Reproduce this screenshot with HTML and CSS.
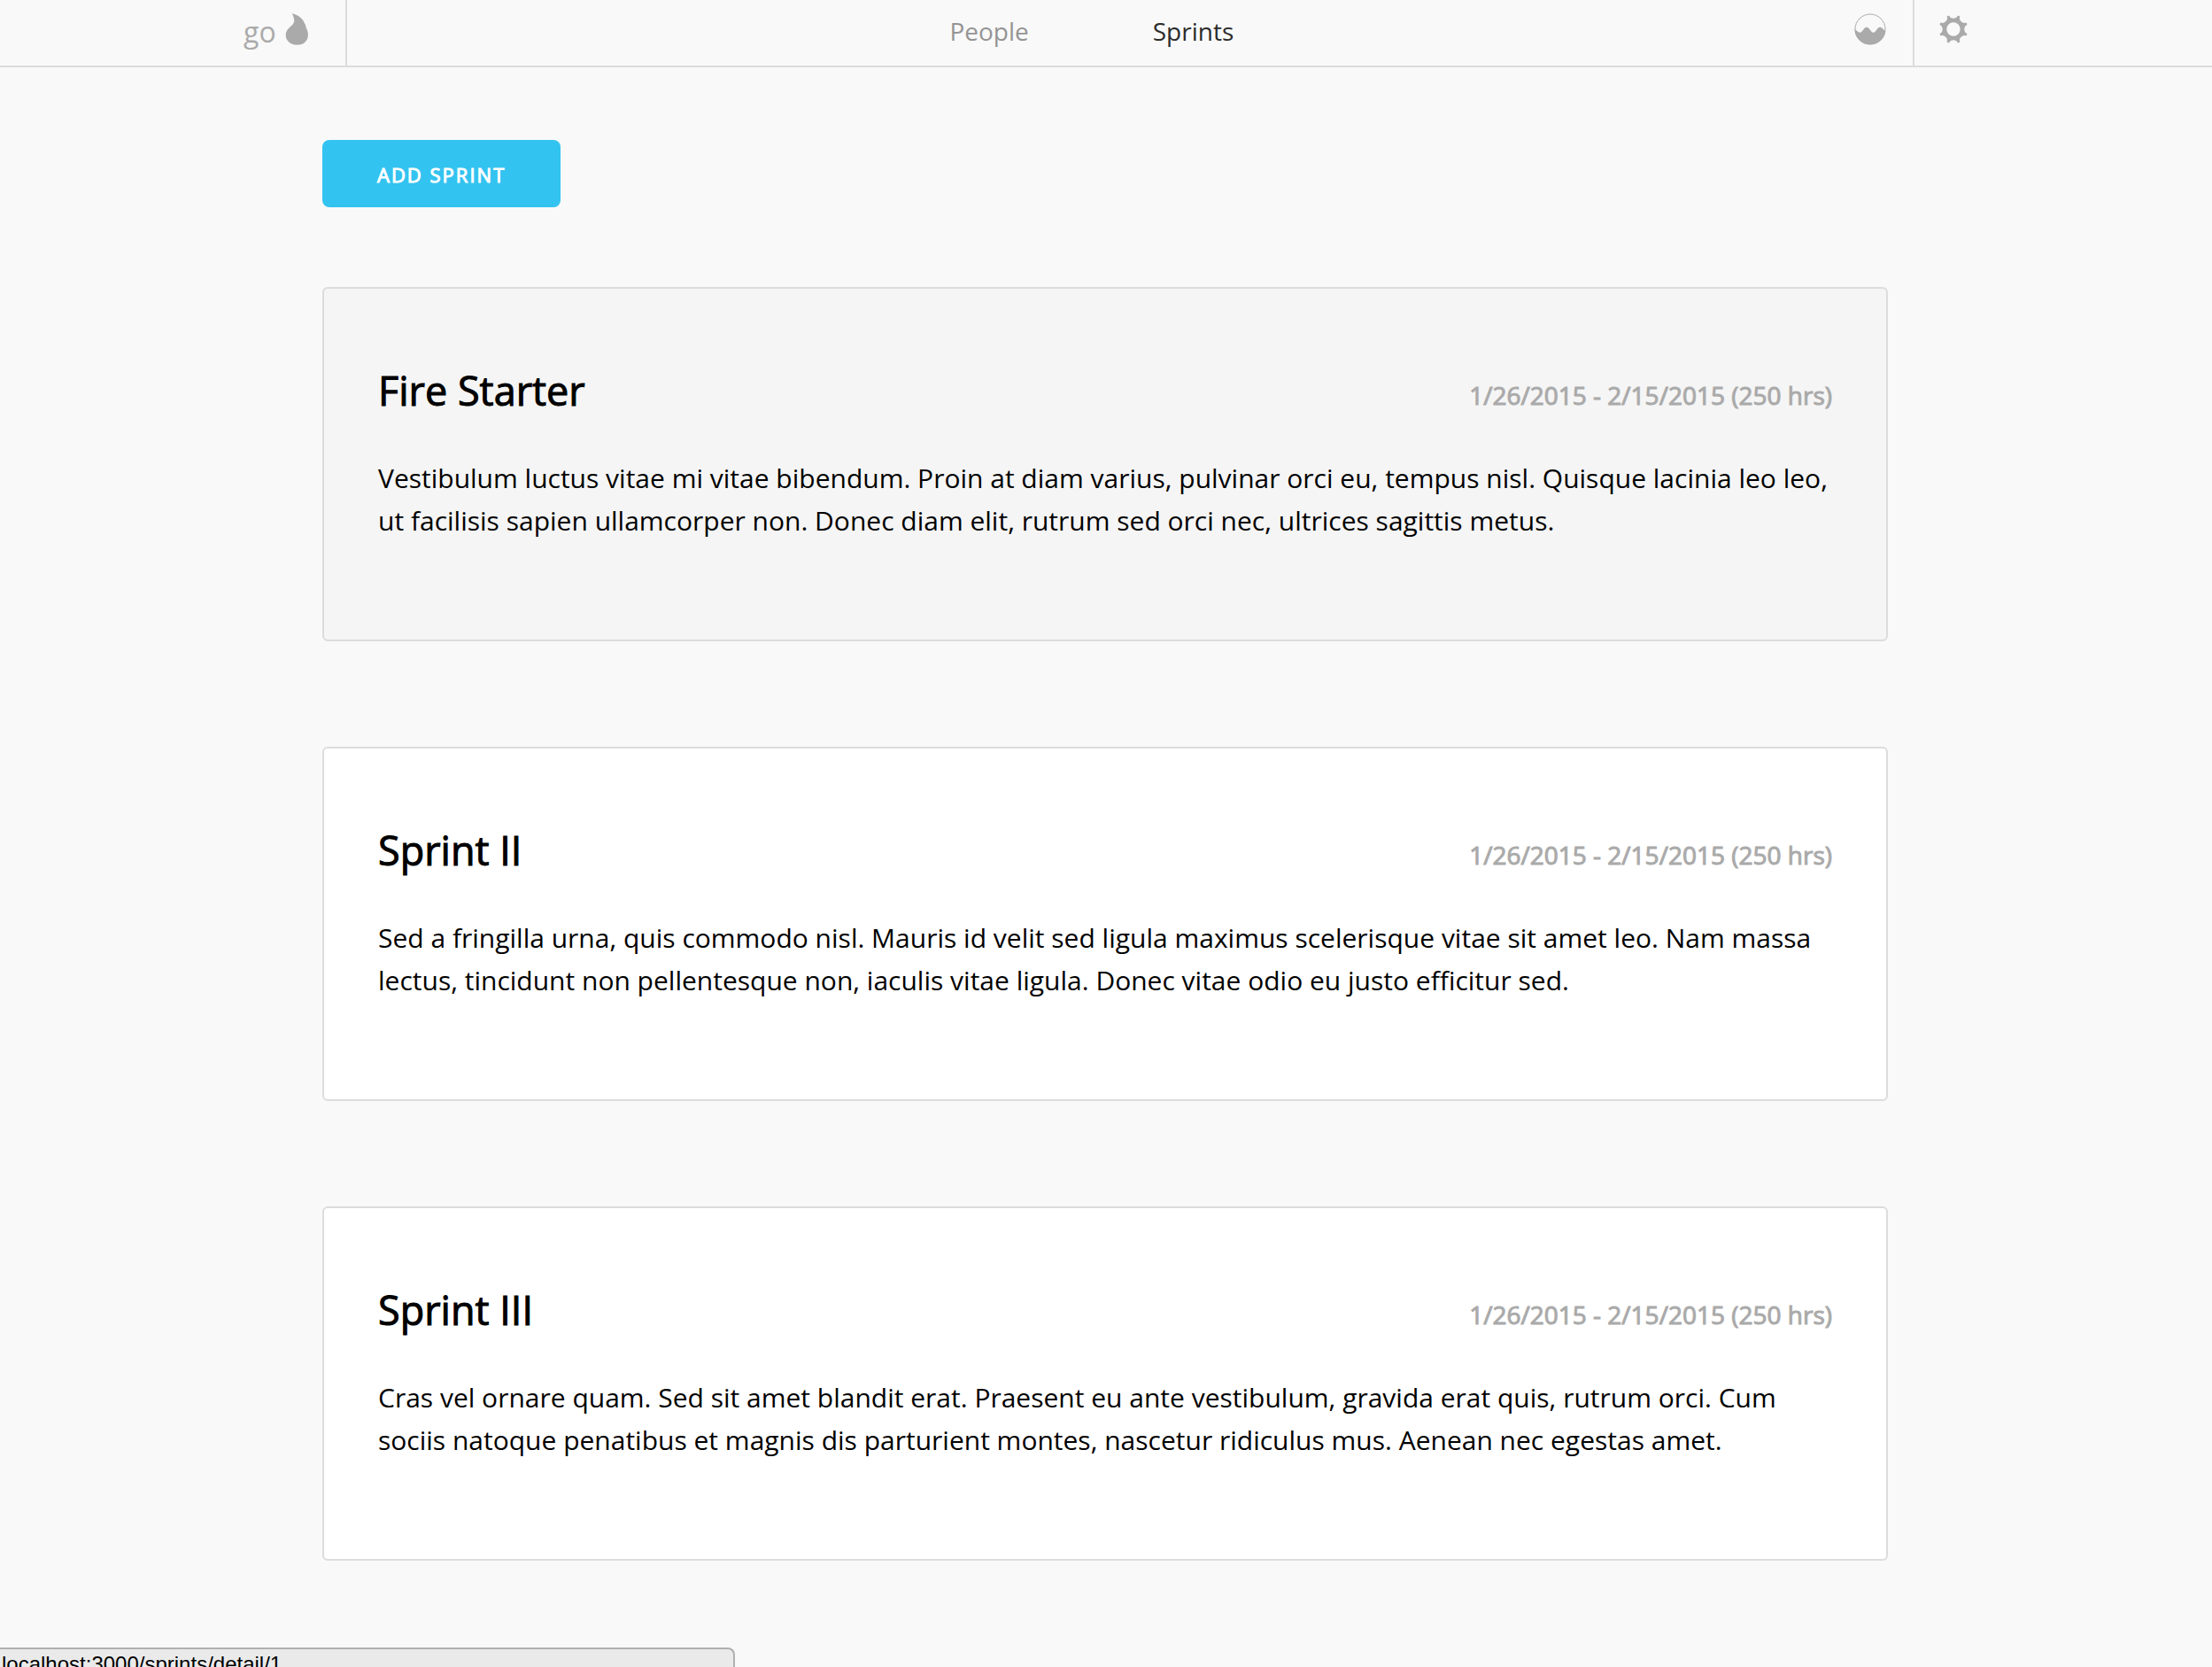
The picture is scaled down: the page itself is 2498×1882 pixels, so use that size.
FILE: index.html
```html
<!DOCTYPE html>
<html lang="en">
<head>
<meta charset="utf-8">
<meta name="viewport" content="width=device-width, initial-scale=1">
<title>Sprints</title>
<link rel="stylesheet" href="styles.css">
</head>
<body>
<header class="site-header">
  <div class="header-inner">
    <a class="logo" href="#">
      <span>go</span>
      <svg class="flame" viewBox="0 0 78 108" aria-hidden="true"><path d="M23 1C40 4 57 15 64 30C68 38 70 40 71 49C76 58 79 68 77 80C74 97 59 107 41 107C20 107 2 93 2 74C2 50 25 46 30 30C32 20 28 9 23 1Z"/></svg>
    </a>
    <nav class="main-nav">
      <a href="#">People</a>
      <a class="active" href="#">Sprints</a>
    </nav>
    <div class="tools">
      <a class="tool" href="#" aria-label="Activity">
        <svg class="icon-wave" viewBox="0 0 108 108" aria-hidden="true"><circle cx="54" cy="54" r="51" fill="none" stroke="currentColor" stroke-width="3"/><path d="M2 54C9 58 12 65 19 65C29 65 31 47 42 47C53 47 55 65 65 65C75 65 76 47 87 47C95 47 98 55 106 60C103 86 81 106 54 106C24 106 1 82 2 54Z"/></svg>
      </a>
      <a class="tool tool-settings" href="#" aria-label="Settings">
        <svg class="icon-gear" viewBox="-48 -48 96 96" aria-hidden="true"><path fill-rule="evenodd" d="M-14.4 -45.8C-11 -34 11 -34 14.4 -45.8Q19.5 -47.1 22.2 -42.6C16.3 -31.8 31.8 -16.3 42.6 -22.2Q47.1 -19.5 45.8 -14.4C34 -11 34 11 45.8 14.4Q47.1 19.5 42.6 22.2C31.8 16.3 16.3 31.8 22.2 42.6Q19.5 47.1 14.4 45.8C11 34 -11 34 -14.4 45.8Q-19.5 47.1 -22.2 42.6C-16.3 31.8 -31.8 16.3 -42.6 22.2Q-47.1 19.5 -45.8 14.4C-34 11 -34 -11 -45.8 -14.4Q-47.1 -19.5 -42.6 -22.2C-31.8 -16.3 -16.3 -31.8 -22.2 -42.6Q-19.5 -47.1 -14.4 -45.8ZM23 0A23 23 0 1 0 -23 0A23 23 0 1 0 23 0Z"/></svg>
      </a>
    </div>
  </div>
</header>
<main class="content">
  <button class="button-primary" type="button">Add Sprint</button>
  <div class="sprints">
    <article class="sprint sprint-hover">
      <div class="sprint-head">
        <h2>Fire Starter</h2>
        <p class="dates">1/26/2015 - 2/15/2015 (250 hrs)</p>
      </div>
      <p>Vestibulum luctus vitae mi vitae bibendum. Proin at diam varius, pulvinar orci eu, tempus nisl. Quisque lacinia leo leo, ut facilisis sapien ullamcorper non. Donec diam elit, rutrum sed orci nec, ultrices sagittis metus.</p>
    </article>
    <article class="sprint">
      <div class="sprint-head">
        <h2>Sprint II</h2>
        <p class="dates">1/26/2015 - 2/15/2015 (250 hrs)</p>
      </div>
      <p>Sed a fringilla urna, quis commodo nisl. Mauris id velit sed ligula maximus scelerisque vitae sit amet leo. Nam massa lectus, tincidunt non pellentesque non, iaculis vitae ligula. Donec vitae odio eu justo efficitur sed.</p>
    </article>
    <article class="sprint">
      <div class="sprint-head">
        <h2>Sprint III</h2>
        <p class="dates">1/26/2015 - 2/15/2015 (250 hrs)</p>
      </div>
      <p>Cras vel ornare quam. Sed sit amet blandit erat. Praesent eu ante vestibulum, gravida erat quis, rutrum orci. Cum sociis natoque penatibus et magnis dis parturient montes, nascetur ridiculus mus. Aenean nec egestas amet.</p>
    </article>
  </div>
</main>
<div class="link-status">localhost:3000/sprints/detail/1</div>
</body>
</html>
```
FILE: styles.css
```css
* { box-sizing: border-box; }

body {
  margin: 0;
  background: #f9f9f9;
  color: #000;
  font-family: "Open Sans", "Noto Sans", sans-serif;
  font-size: 30px;
  line-height: 48px;
}

h2, p { margin: 0; }
a { color: inherit; text-decoration: none; }
svg { display: block; fill: currentColor; }

.site-header {
  border-bottom: 2px solid #dcdcdc;
  color: #aaa;
}

.header-inner {
  display: grid;
  grid-template-columns: auto 1fr auto;
  max-width: 2000px;
  height: 74px;
  margin: 0 auto;
}

.logo {
  display: flex;
  align-items: center;
  gap: 10px;
  padding: 0 42px 8px 26px;
  border-right: 2px solid #dcdcdc;
  font-size: 32px;
}

.logo span { padding-top: 6px; }
.flame { width: 26px; height: 36px; }

.main-nav {
  display: flex;
  align-items: center;
  justify-content: center;
  gap: 140px;
  padding: 0 0 4px 10px;
  color: #949494;
  font-size: 28px;
}

.main-nav .active { color: #2b2b2b; }

.tools { display: flex; }

.tool {
  display: flex;
  align-items: center;
  padding: 0 30px 8px;
}

.tool-settings {
  padding: 0 27px 8px 28px;
  border-left: 2px solid #dcdcdc;
}

.icon-wave { width: 36px; height: 36px; }
.icon-gear { width: 32px; height: 32px; }

.content {
  max-width: 1770px;
  margin: 0 auto;
  padding: 82px 2px 0 0;
}

.button-primary {
  display: block;
  height: 76px;
  padding: 2px 62px 0;
  border: 0;
  border-radius: 8px;
  background: #33c3f0;
  color: #fff;
  font-family: inherit;
  font-size: 22px;
  letter-spacing: 2px;
  text-transform: uppercase;
  -webkit-text-stroke: 1px currentColor;
}

.sprints {
  display: grid;
  gap: 119px;
  margin-top: 90px;
}

.sprint {
  padding: 79px 61px 110px;
  border: 2px solid #dcdcdc;
  border-radius: 6px;
  background: #fff;
}

.sprint-hover { background: #f5f5f5; }

.sprint-head {
  display: flex;
  align-items: flex-end;
  justify-content: space-between;
  margin-bottom: 39px;
}

.sprint h2 {
  font-size: 45px;
  font-weight: 400;
  line-height: 72px;
  -webkit-text-stroke: 1px currentColor;
}

.dates {
  padding-bottom: 7px;
  color: #aaa;
  font-size: 28px;
  -webkit-text-stroke: 1px currentColor;
}

.link-status {
  position: fixed;
  left: 0;
  bottom: 0;
  width: 830px;
  max-width: 100%;
  height: 22px;
  padding: 3px 2px 0;
  overflow: hidden;
  border: solid #b0b0b0;
  border-width: 2px 2px 0 0;
  border-top-right-radius: 8px;
  background: #eaeaea;
  font-family: "Liberation Sans", Arial, sans-serif;
  font-size: 24px;
  line-height: 28px;
}
```
